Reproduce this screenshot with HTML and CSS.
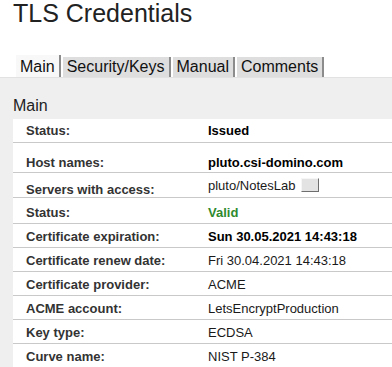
FILE: index.html
```html
<!DOCTYPE html>
<html lang="en">
<head>
    <meta charset="UTF-8">
    <title>TLS Credentials</title>
    <link rel="stylesheet" href="styles.css">
</head>
<body>

    <h1 class="page-title">TLS Credentials</h1>

    <!-- Tab strip -->
    <div class="tabs">
        <span class="tab active">Main</span>
        <span class="tab">Security/Keys</span>
        <span class="tab">Manual</span>
        <span class="tab">Comments</span>
    </div>

    <div class="panel">
        <h2 class="panel-title">Main</h2>

        <table class="fields">
            <colgroup>
                <col class="col-label">
                <col>
            </colgroup>
            <tr class="row-first">
                <td class="label">Status:</td>
                <td class="value strong">Issued</td>
            </tr>
            <tr class="row-hosts">
                <td class="label">Host names:</td>
                <td class="value strong">pluto.csi-domino.com</td>
            </tr>
            <tr class="row-servers">
                <td class="label">Servers with access:</td>
                <td class="value">pluto/NotesLab <span class="mini-btn"></span></td>
            </tr>
            <tr class="row-valid">
                <td class="label">Status:</td>
                <td class="value strong valid">Valid</td>
            </tr>
            <tr>
                <td class="label">Certificate expiration:</td>
                <td class="value strong">Sun 30.05.2021 14:43:18</td>
            </tr>
            <tr>
                <td class="label">Certificate renew date:</td>
                <td class="value">Fri 30.04.2021 14:43:18</td>
            </tr>
            <tr>
                <td class="label">Certificate provider:</td>
                <td class="value">ACME</td>
            </tr>
            <tr>
                <td class="label">ACME account:</td>
                <td class="value">LetsEncryptProduction</td>
            </tr>
            <tr>
                <td class="label">Key type:</td>
                <td class="value">ECDSA</td>
            </tr>
            <tr>
                <td class="label">Curve name:</td>
                <td class="value">NIST P-384</td>
            </tr>
        </table>
    </div>

</body>
</html>
```

FILE: styles.css
```css
/* Basic reset */
* {
    margin: 0;
    padding: 0;
    box-sizing: border-box;
}

body {
    font-family: "Liberation Sans", Arial, sans-serif;
    color: #222;
    background: #fff;
    overflow: hidden;
}

/* Page title */
.page-title {
    font-size: 25px;
    line-height: 26px;
    font-weight: 400;
    color: #222;
    padding-left: 13px;
}

/* Tabs */
.tabs {
    display: flex;
    align-items: flex-end;
    margin-top: 29px;
    padding-left: 16px;
    height: 22px;
}

.tab {
    font-size: 16px;
    line-height: 20px;
    height: 20px;
    padding: 0 4px;
    background: #dedede;
    color: #111;
    border-right: 2px solid #8c8c8c;
    margin-right: 2px;
}

.tab.active {
    height: 22px;
    padding-top: 2px;
    background: #f8f8f8;
}

/* Panel */
.panel {
    background: #efefef;
    border-top: 1px solid #e2e2e2;
    padding: 18px 0 0 13px;
}

.panel-title {
    font-size: 16px;
    line-height: 20px;
    font-weight: 400;
    color: #222;
    margin-bottom: 3px;
}

/* Field table */
.fields {
    width: 100%;
    background: #fff;
    border-collapse: separate;
    border-spacing: 0;
    table-layout: fixed;
    font-size: 13px;
    line-height: 15px;
}

.col-label {
    width: 195px;
}

.fields td {
    padding: 5px 0 3px;
    border-bottom: 1px solid #c9c9c9;
    vertical-align: top;
    white-space: nowrap;
}

.fields .label {
    padding-left: 13px;
    font-weight: 700;
    color: #333;
}

.fields .value {
    color: #1a1a1a;
}

.fields .strong {
    font-weight: 700;
    color: #000;
}

.fields .valid {
    color: #2f8a2f;
}

/* Row tweaks */
.row-first td { padding: 4px 0 4px; }
.row-hosts td { padding: 12px 0 2px; }
.row-servers td { padding: 9px 0 0; }
.row-servers td.value { padding-top: 5px; }
.row-valid td { padding: 7px 0 3px; }

.fields tr td.label { padding-left: 13px; }

/* Small empty button next to server name */
.mini-btn {
    display: inline-block;
    width: 18px;
    height: 14px;
    vertical-align: -2px;
    margin-left: 2px;
    background: #e3e3e3;
    border: 1px solid;
    border-color: #f6f6f6 #6e6e6e #6e6e6e #f6f6f6;
}
```
